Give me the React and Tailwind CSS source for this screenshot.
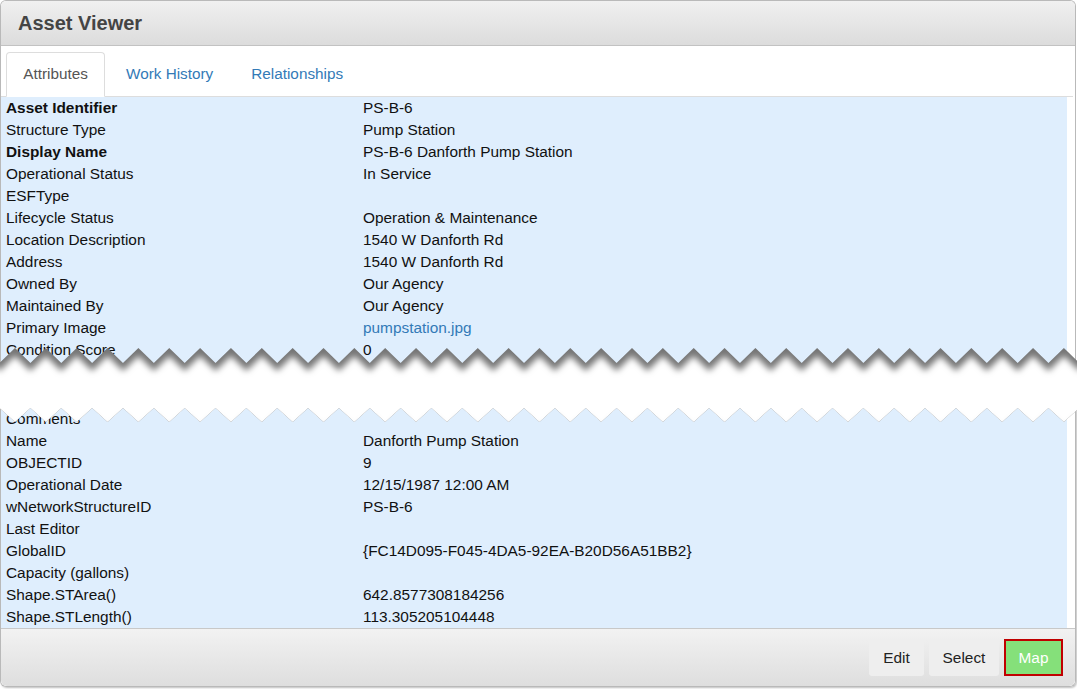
import React from "react";

const topRows = [
  ["Asset Identifier", "PS-B-6", true],
  ["Structure Type", "Pump Station"],
  ["Display Name", "PS-B-6 Danforth Pump Station", true],
  ["Operational Status", "In Service"],
  ["ESFType", ""],
  ["Lifecycle Status", "Operation & Maintenance"],
  ["Location Description", "1540 W Danforth Rd"],
  ["Address", "1540 W Danforth Rd"],
  ["Owned By", "Our Agency"],
  ["Maintained By", "Our Agency"],
  ["Primary Image", "pumpstation.jpg", false, true],
  ["Condition Score", "0"],
  ["Condition Date", ""],
];

const bottomRows = [
  ["Comments", ""],
  ["Name", "Danforth Pump Station"],
  ["OBJECTID", "9"],
  ["Operational Date", "12/15/1987 12:00 AM"],
  ["wNetworkStructureID", "PS-B-6"],
  ["Last Editor", ""],
  ["GlobalID", "{FC14D095-F045-4DA5-92EA-B20D56A51BB2}"],
  ["Capacity (gallons)", ""],
  ["Shape.STArea()", "642.8577308184256"],
  ["Shape.STLength()", "113.305205104448"],
];

function Row({ label, value, bold, link }) {
  return (
    <div className="grid grid-cols-[357px_1fr] h-[22px] leading-[22px] pl-[5px] whitespace-nowrap">
      <span className={bold ? "font-bold" : ""}>{label}</span>
      <span className={link ? "text-[#337ab7]" : ""}>{value}</span>
    </div>
  );
}

// torn-paper band between the two halves
function TornEdge() {
  const period = 30.85;
  const start = 15;
  const top = [];
  const bottom = [];
  for (let n = -1; n < 36; n++) {
    const x = start + n * period;
    top.push(`${x},8`, `${x + period / 2},23`);
    bottom.push(`${x},82`, `${x + period / 2},68`);
  }
  const band = [...top, ...bottom.reverse()].join(" ");
  return (
    <svg
      className="absolute left-0 top-[340px]"
      width="1077"
      height="90"
      viewBox="0 0 1077 90"
    >
      <defs>
        <clipPath id="band">
          <polygon points={band} />
        </clipPath>
        <filter id="soft" x="-5%" y="-50%" width="110%" height="200%">
          <feGaussianBlur stdDeviation="3" />
        </filter>
      </defs>
      <g clipPath="url(#band)">
        <rect x="0" y="0" width="1077" height="90" fill="#767676" />
        <polygon points={band} fill="#fff" transform="translate(0 8)" filter="url(#soft)" />
      </g>
    </svg>
  );
}

export default function App() {
  return (
    <div
      className="relative w-[1077px] h-[689px] bg-white text-[15.4px] text-[#111]"
      style={{ fontFamily: '"Liberation Sans", Arial, sans-serif' }}
    >
      <div className="w-[1076px] h-[365px] overflow-hidden border border-b-0 border-[#b9b9b9] rounded-t-[6px]">
        <div className="h-[45px] flex items-center pl-[17px] bg-gradient-to-b from-[#f0f0f0] to-[#dcdcdc] border-b border-[#c2c2c2]">
          <h1 className="text-[20px] font-bold text-[#444]">Asset Viewer</h1>
        </div>
        <div className="flex items-end gap-[2px] pt-[6px] pl-[5px] border-b border-[#dddddd] mr-[2px] text-[15.3px]">
          <div className="w-[99px] h-[45px] -mb-px flex items-center justify-center bg-white border border-[#dddddd] border-b-white rounded-t-[4px] text-[#555]">
            Attributes
          </div>
          <div className="h-[45px] -mb-px flex items-center px-[19px] text-[#337ab7]">Work History</div>
          <div className="h-[45px] -mb-px flex items-center px-[17px] text-[#337ab7]">Relationships</div>
        </div>
        <div className="bg-[#dfeefd] mr-[8px]">
          {topRows.map(([l, v, b, k]) => (
            <Row key={l} label={l} value={v} bold={b} link={k} />
          ))}
        </div>
      </div>

      <div className="h-[43px]" />

      <div className="w-[1076px] border border-t-0 border-[#b9b9b9] rounded-b-[6px] shadow-[1px_1px_2px_rgba(0,0,0,0.25)]">
        <div className="bg-[#dfeefd] mr-[8px]">
          {bottomRows.map(([l, v]) => (
            <Row key={l} label={l} value={v} />
          ))}
        </div>
        <div className="h-[58px] flex justify-end items-start gap-[5px] pt-[10px] pr-[12px] border-t border-[#c8c8c8] bg-gradient-to-b from-[#f2f2f2] to-[#dedede] rounded-b-[6px]">
          <button className="w-[55px] h-[37px] rounded-[3px] bg-[#eeeeee] text-[#222]">Edit</button>
          <button className="w-[70px] h-[37px] rounded-[3px] bg-[#eeeeee] text-[#222]">Select</button>
          <button className="w-[59px] h-[37px] bg-[#85e07a] border-2 border-[#c00000] text-white">Map</button>
        </div>
      </div>

      <TornEdge />
    </div>
  );
}
